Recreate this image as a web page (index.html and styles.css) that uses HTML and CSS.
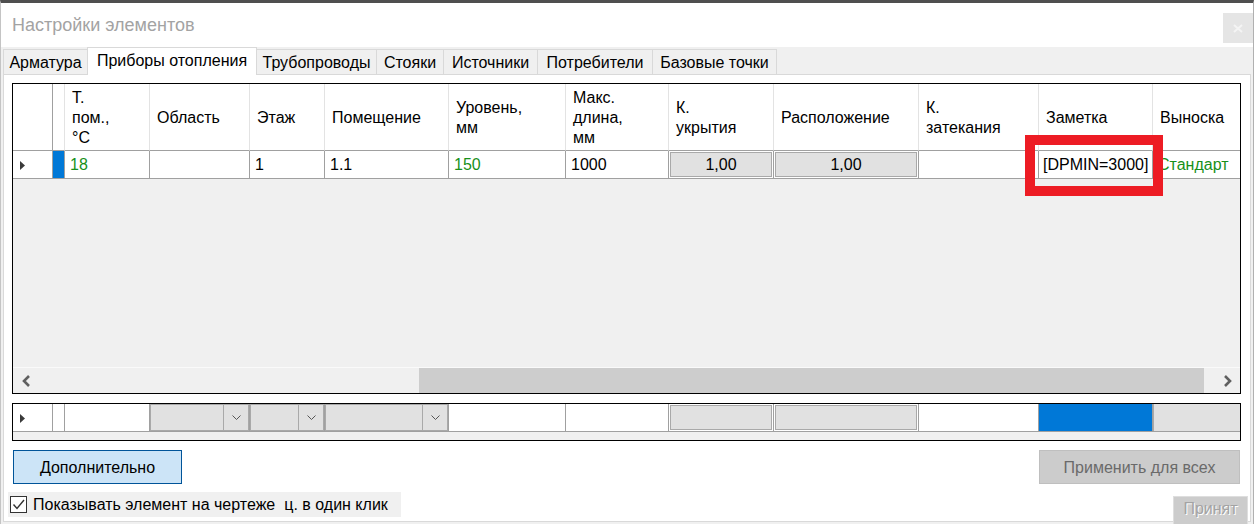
FILE: index.html
```html
<!DOCTYPE html>
<html lang="ru">
<head>
<meta charset="utf-8">
<title>Настройки элементов</title>
<link rel="stylesheet" href="styles.css">
</head>
<body>
<div class="window">
  <div class="titlebar">
    <div class="title">Настройки элементов</div>
    <div class="close">
      <svg width="10" height="9" viewBox="0 0 10 9"><path d="M1 1 L9 8 M9 1 L1 8" stroke="#f4f4f4" stroke-width="2"/></svg>
    </div>
  </div>
  <div class="tabs-area">
    <div class="tabstrip">
      <div class="tab w1">Арматура</div>
      <div class="tab sel w2">Приборы отопления</div>
      <div class="tab nol w3">Трубопроводы</div>
      <div class="tab w4">Стояки</div>
      <div class="tab w5">Источники</div>
      <div class="tab w6">Потребители</div>
      <div class="tab last w7">Базовые точки</div>
    </div>
    <div class="page">
      <div class="dgv">
        <div class="row head">
          <div class="c rh"></div>
          <div class="c sl"></div>
          <div class="c">Т.<br>пом.,<br>°C</div>
          <div class="c">Область</div>
          <div class="c">Этаж</div>
          <div class="c">Помещение</div>
          <div class="c">Уровень,<br>мм</div>
          <div class="c">Макс.<br>длина,<br>мм</div>
          <div class="c">К.<br>укрытия</div>
          <div class="c">Расположение</div>
          <div class="c">К.<br>затекания</div>
          <div class="c">Заметка</div>
          <div class="c nobr">Выноска</div>
        </div>
        <div class="row data">
          <div class="c rh"><svg class="tri" width="5" height="9" viewBox="0 0 5 9"><polygon points="0,0 5,4.5 0,9" fill="#3a3a3a"/></svg></div>
          <div class="c sl blue"></div>
          <div class="c green">18</div>
          <div class="c"></div>
          <div class="c">1</div>
          <div class="c">1.1</div>
          <div class="c green">150</div>
          <div class="c">1000</div>
          <div class="c box"><div class="bx">1,00</div></div>
          <div class="c box"><div class="bx">1,00</div></div>
          <div class="c"></div>
          <div class="c note">[DPMIN=3000]</div>
          <div class="c nobr green">Стандарт</div>
        </div>
        <div class="empty"></div>
        <div class="hscroll">
          <div class="sbtn"><svg width="10" height="12" viewBox="0 0 10 12"><polyline points="8,1 3,6 8,11" fill="none" stroke="#606060" stroke-width="2.6"/></svg></div>
          <div class="track"><div class="thumb"></div></div>
          <div class="sbtn"><svg width="10" height="12" viewBox="0 0 10 12"><polyline points="2,1 7,6 2,11" fill="none" stroke="#606060" stroke-width="2.6"/></svg></div>
        </div>
        <div class="mark"></div>
      </div>

      <div class="dgv2">
        <div class="row data2">
          <div class="c rh"><svg class="tri" width="5" height="9" viewBox="0 0 5 9"><polygon points="0,0 5,4.5 0,9" fill="#3a3a3a"/></svg></div>
          <div class="c sl"></div>
          <div class="c"></div>
          <div class="c combo"><div class="cb"><div class="cb-text"></div><div class="cb-btn"><svg width="9" height="5" viewBox="0 0 9 5"><polyline points="0.5,0.5 4.5,4.5 8.5,0.5" fill="none" stroke="#555" stroke-width="1"/></svg></div></div></div>
          <div class="c combo"><div class="cb"><div class="cb-text"></div><div class="cb-btn"><svg width="9" height="5" viewBox="0 0 9 5"><polyline points="0.5,0.5 4.5,4.5 8.5,0.5" fill="none" stroke="#555" stroke-width="1"/></svg></div></div></div>
          <div class="c combo"><div class="cb"><div class="cb-text"></div><div class="cb-btn"><svg width="9" height="5" viewBox="0 0 9 5"><polyline points="0.5,0.5 4.5,4.5 8.5,0.5" fill="none" stroke="#555" stroke-width="1"/></svg></div></div></div>
          <div class="c"></div>
          <div class="c"></div>
          <div class="c box"><div class="bx"></div></div>
          <div class="c box"><div class="bx"></div></div>
          <div class="c"></div>
          <div class="c blue"></div>
          <div class="c nobr grayc"></div>
        </div>
      </div>

      <div class="btnrow">
        <div class="btn more">Дополнительно</div>
        <div class="btn apply">Применить для всех</div>
      </div>

      <div class="footer">
        <div class="chkrow">
          <div class="checkbox"><svg width="15" height="15" viewBox="0 0 15 15"><polyline points="2.5,7.5 6,11.5 13,3" fill="none" stroke="#333" stroke-width="1.4"/></svg></div>
          <span class="lbl">Показывать элемент на чертеже</span>
          <span class="tail">ц. в один клик</span>
        </div>
        <div class="btn ok">Принят</div>
      </div>
    </div>
  </div>
</div>
</body>
</html>
```

FILE: styles.css
```css
* { box-sizing: border-box; margin: 0; padding: 0; }
html, body { width: 1254px; height: 524px; overflow: hidden; background: #f0f0f0; }
body { font-family: "Liberation Sans", Arial, sans-serif; font-size: 16px; color: #000; }

.window {
  width: 1254px; height: 524px;
  border-top: 3px solid #4f4f4f;
  border-left: 1px solid #c4c4c4;
  border-right: 1px solid #b0b0b0;
  background: #f0f0f0;
  display: flex; flex-direction: column;
  overflow: hidden;
}

.titlebar { height: 44px; flex: none; background: #fff; display: flex; justify-content: space-between; align-items: flex-start; }
.title { font-size: 18px; color: #a3a3a3; padding-left: 11px; line-height: 44px; }
.close { width: 30px; height: 30px; margin-top: 10px; background: #e5e5e5; display: flex; align-items: center; justify-content: center; }

.tabs-area { flex: 1; padding-left: 2px; display: flex; flex-direction: column; }
.tabstrip { height: 27px; flex: none; display: flex; align-items: flex-end; }
.tab {
  height: 25px; background: #f0f0f0;
  border-top: 1px solid #d9d9d9; border-left: 1px solid #d9d9d9;
  display: flex; align-items: center; justify-content: center;
  white-space: nowrap; font-size: 16px; padding-top: 1px;
}
.tab.nol { border-left: none; }
.tab.last { border-right: 1px solid #d9d9d9; }
.tab.sel { height: 28px; background: #fff; border-right: 1px solid #d9d9d9; margin-bottom: -1px; position: relative; z-index: 1; padding-top: 0; padding-bottom: 2px; }
.w1 { width: 84px; } .w2 { width: 170px; } .w3 { width: 119px; } .w4 { width: 67px; }
.w5 { width: 94px; } .w6 { width: 115px; } .w7 { width: 125px; }

.page { width: 1248px; height: 448px; flex: none; background: #fff; border: 1px solid #d9d9d9; padding: 8px 9px 0 8px; }

/* data grid */
.dgv { width: 1229px; height: 311px; border: 1px solid #000; background: #f0f0f0; position: relative; overflow: hidden; display: flex; flex-direction: column; }
.row { display: grid; grid-template-columns: 40px 12px 85px 100px 75px 124px 117px 103px 105px 145px 120px 114px 87px; flex: none; }
.c { display: flex; align-items: center; white-space: nowrap; overflow: hidden; background: #fff; }

.head { height: 67px; }
.head .c { border-right: 1px solid #e3e3e3; border-bottom: 1px solid #a0a0a0; padding-left: 7px; padding-top: 1px; line-height: 20px; }
.head .rh { border-right-color: #a0a0a0; }

.data, .data2 { height: 28px; }
.data .c, .data2 .c { border-right: 1px solid #a0a0a0; border-bottom: 1px solid #a0a0a0; padding-left: 5px; padding-top: 1px; }
.c.nobr { border-right: none; }
.c.rh { padding-left: 7px; }
.c.sl { padding-left: 0; }
.blue { background: #0078d7; }
.green { color: #17901a; }
.data .note { padding-left: 4px; }

.data .c.box, .data2 .c.box { padding: 1px; }
.bx { flex: 1; height: 100%; background: #e1e1e1; border: 1px solid #a9a9a9; display: flex; align-items: center; justify-content: center; padding-top: 1px; }

.empty { height: 188px; flex: none; background: #f0f0f0; }

.hscroll { height: 26px; flex: none; border-top: 1px solid #fafafa; background: #f0f0f0; display: flex; }
.sbtn { width: 25px; flex: none; display: flex; align-items: center; justify-content: center; }
.track { flex: 1; display: flex; }
.thumb { margin-left: 381px; width: 785px; background: #cdcdcd; }

.mark { position: absolute; left: 1012px; top: 51px; width: 138px; height: 61px; border: 10px solid #ed1c24; }

/* new row grid */
.dgv2 { width: 1229px; height: 38px; margin-top: 9px; border: 1px solid #000; background: #f0f0f0; }
.data2 .c.combo { padding: 0; }
.cb { flex: 1; height: 100%; display: flex; border: 1px solid #a9a9a9; background: #e1e1e1; }
.cb-text { flex: 1; }
.cb-btn { width: 25px; flex: none; border-left: 1px solid #a9a9a9; display: flex; align-items: center; justify-content: center; }
.c.grayc { background: #e1e1e1; box-shadow: inset 1px 0 #a9a9a9; }

/* buttons */
.btnrow { display: flex; justify-content: space-between; margin-top: 9px; }
.btn { display: flex; align-items: center; justify-content: center; font-size: 16px; white-space: nowrap; }
.more { width: 169px; height: 34px; margin-left: 1px; background: #cce4f7; border: 1px solid #005499; padding-top: 1px; }
.apply { width: 201px; height: 34px; margin-right: 1px; background: #cccccc; border: 1px solid #bfbfbf; color: #6a6a6a; padding-top: 1px; }

.footer { display: flex; justify-content: space-between; align-items: flex-start; margin-top: 8px; }
.chkrow { width: 393px; height: 25px; margin-left: -4px; background: #f0f0f0; display: flex; align-items: center; padding-left: 2px; }
.checkbox { width: 17px; height: 17px; border: 1px solid #333; background: #fff; display: flex; align-items: center; justify-content: center; }
.lbl { margin-left: 6px; }
.tail { margin-left: 9px; }
.ok { width: 75px; height: 30px; margin-top: 4px; margin-right: -7px; padding-bottom: 5px; background: #cccccc; border: 1px solid #dedede; color: #a3a3a3; text-shadow: 1px 1px 0 #fff; position: relative; z-index: 1; }
```
